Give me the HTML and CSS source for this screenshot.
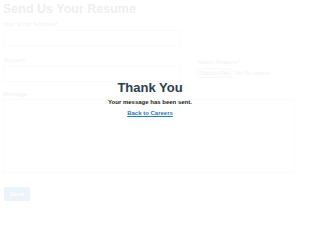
FILE: index.html
```html
<!DOCTYPE html>
<html>
<head>
<meta charset="utf-8">
<link rel="stylesheet" href="styles.css">
</head>
<body>
<div class="page">
  <form class="form">
    <h1 class="title">Send Us Your Resume</h1>
    <div class="row">
      <div class="col-left">
        <label class="label">Your Email Address*</label>
        <div class="input"></div>
        <label class="label label-gap">Subject*</label>
        <div class="input"></div>
      </div>
      <div class="col-right">
        <label class="label">Attach Resume*</label>
        <div class="file"><span class="file-btn">Choose File</span><span class="file-text">No file chosen</span></div>
      </div>
    </div>
    <label class="label label-msg">Message</label>
    <div class="textarea"></div>
    <div class="btn">Send</div>
  </form>
  <div class="thanks">
    <div class="thanks-title">Thank You</div>
    <div class="thanks-msg">Your message has been sent.</div>
    <a class="thanks-link" href="#">Back to Careers</a>
  </div>
</div>
</body>
</html>
```
FILE: styles.css
```css
html, body {
  margin: 0;
  padding: 0;
  background: #fff;
  font-family: "Liberation Sans", Arial, sans-serif;
}
.page {
  position: relative;
  width: 300px;
  height: 203px;
  overflow: hidden;
}
.form {
  opacity: 0.08;
  padding: 0 5px 0 3px;
  display: flex;
  flex-direction: column;
  color: #333;
}
.title {
  margin: 0;
  font-size: 12.5px;
  line-height: 16px;
  padding-top: 1px;
  font-weight: bold;
  height: 16px;
}
.row {
  display: flex;
  gap: 16px;
  margin-top: 3px;
}
.col-left {
  width: 178px;
  display: flex;
  flex-direction: column;
}
.col-right {
  display: flex;
  flex-direction: column;
  padding-top: 38px;
}
.label {
  display: block;
  font-size: 6px;
  line-height: 8px;
  height: 8px;
  color: #444;
}
.label-gap {
  margin-top: 10px;
}
.input {
  margin-top: 2px;
  height: 14px;
  border: 1px solid #d0d0d0;
  border-radius: 2px;
}
.file {
  margin-top: 2px;
  display: flex;
  align-items: center;
  gap: 3px;
  font-size: 5.5px;
  color: #444;
}
.file-btn {
  border: 1px solid #bbb;
  border-radius: 2px;
  padding: 1px 2px;
  background: #eee;
}
.label-msg {
  margin-top: 8px;
}
.textarea {
  margin-top: 1px;
  height: 72px;
  border: 1px solid #d0d0d0;
  border-radius: 2px;
}
.btn {
  margin-top: 14px;
  margin-left: 1px;
  width: 26px;
  height: 14px;
  background: #1a6fd0;
  color: #fff;
  font-size: 6px;
  font-weight: bold;
  display: flex;
  align-items: center;
  justify-content: center;
  border-radius: 1px;
}
.thanks {
  position: absolute;
  left: 0;
  right: 0;
  top: 81px;
  display: flex;
  flex-direction: column;
  align-items: center;
}
.thanks-title {
  font-size: 13px;
  line-height: 14px;
  font-weight: bold;
  color: #2c3e50;
}
.thanks-msg {
  margin-top: 4px;
  font-size: 6px;
  line-height: 7px;
  font-weight: bold;
  color: #222;
}
.thanks-link {
  margin-top: 4px;
  font-size: 6px;
  line-height: 7px;
  font-weight: bold;
  color: #2a7cc0;
  text-decoration: underline;
}
```
